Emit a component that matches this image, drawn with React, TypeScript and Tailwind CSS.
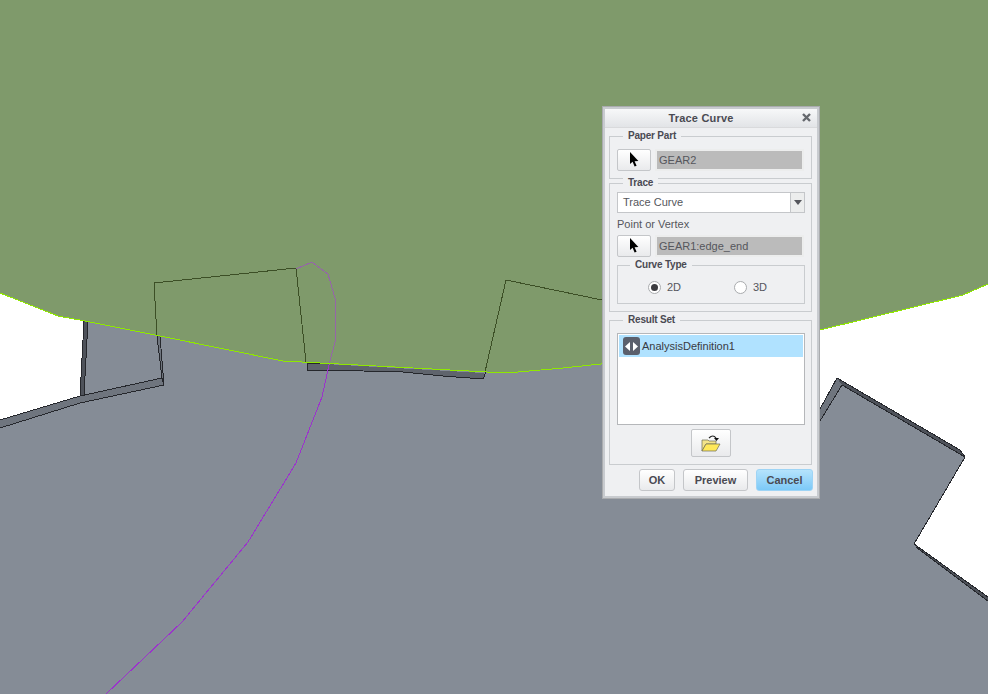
const FONT = { fontFamily: '"Liberation Sans", Arial, sans-serif' };

const Cursor = () => (
  <svg width="11" height="16" viewBox="0 0 11 16">
    <path d="M1 0 L1 12 L3.6 9.8 L5.6 14.6 L7.6 13.8 L5.6 9.2 L9.4 9 Z" fill="#000" />
  </svg>
);

const Fieldset = ({ label, left = "left-3", className, children }: any) => (
  <div className={`relative border border-[#c9cccf] ${className}`}>
    <span className={`absolute -top-[8px] ${left} bg-[#eff0f2] px-[5px] text-[10px] leading-[14px] font-bold tracking-[-0.2px] text-[#4a4a52]`}>
      {label}
    </span>
    {children}
  </div>
);

const PickRow = ({ value }: { value: string }) => (
  <div className="flex items-center gap-[4px]">
    <button className="flex h-[22px] w-[34px] items-center justify-center rounded-[2px] border border-[#c4c6c9] bg-gradient-to-b from-[#ffffff] to-[#e9eaec]">
      <Cursor />
    </button>
    <div className="flex h-[22px] w-[149px] items-center border-2 border-[#eceded] bg-[#bbbbbb] pl-[2px] text-[11px] text-[#55565c]">
      {value}
    </div>
  </div>
);

const Radio = ({ label, on }: { label: string; on?: boolean }) => (
  <div className="flex items-center gap-[6px]">
    <span className="flex h-[13px] w-[13px] items-center justify-center rounded-full border border-[#a9abae] bg-white">
      {on && <span className="h-[7px] w-[7px] rounded-full bg-[#3c3c40]" />}
    </span>
    <span className="text-[11px] text-[#55565c]">{label}</span>
  </div>
);

const ActionButton = ({ label, primary, className }: any) => (
  <button
    className={`h-[22px] rounded-[3px] border text-[11px] font-bold text-[#4a4a52] ${
      primary
        ? "border-[#9ed4f5] bg-gradient-to-b from-[#b5e3fc] to-[#7cc9f7]"
        : "border-[#c4c6c9] bg-gradient-to-b from-[#ffffff] to-[#e9eaec]"
    } ${className}`}
  >
    {label}
  </button>
);

const Scene = () => (
  <svg className="absolute inset-0" width="988" height="694" viewBox="0 0 988 694" shapeRendering="crispEdges">
    <polygon points="0,420 80,396 85,321 283,361 620,362 700,480 820,409 837,378 960,450 965,457 914,544 988,597 988,694 0,694" fill="#858c96" />
    <polygon points="0,0 988,0 988,284 963,295 820,330 620,362 507,373 487,372 395,367 320,363 283,361 160,336 85,321 58,316 0,293" fill="#7f9a6b" />

    {/* left tooth side faces */}
    <polygon points="84,321 88,321 84,395 80,396" fill="#4e525a" />
    <polygon points="0,420 80,396 162,378 164,385 80,403 0,428" fill="#6f757e" />
    <polyline points="0,420 80,396 162,378" fill="none" stroke="#25272c" />
    <polyline points="0,428 80,403 164,385" fill="none" stroke="#25272c" />
    <polyline points="84,321 80,396" fill="none" stroke="#25272c" />
    <polyline points="88,321 84,395" fill="none" stroke="#25272c" />
    <polygon points="157,336 160,336 164,385 162,378" fill="#6f757e" />
    <polyline points="157,336 162,378 164,385" fill="none" stroke="#25272c" />
    <polyline points="160,336 164,385" fill="none" stroke="#25272c" />

    {/* bottom of the notch */}
    <polygon points="307,363 484,373 484,379 403,372 307,370" fill="#5f646c" />
    <polyline points="307,363 307,370 363,371 403,372 443,376 483,379 486,372" fill="none" stroke="#25272c" />
    <polyline points="307,363 320,363" fill="none" stroke="#25272c" />

    {/* right tooth */}
    <polygon points="820,409 837,378 842,385 820,421" fill="#6f757e" />
    <polygon points="837,378 960,450 965,457 842,385" fill="#4e525a" />
    <polyline points="820,409 837,378 960,450 965,457 914,544" fill="none" stroke="#25272c" />
    <polyline points="820,421 842,385 965,457" fill="none" stroke="#25272c" />
    <polygon points="914,544 988,597 988,601 916,547" fill="#4e525a" />
    <polyline points="914,544 988,597" fill="none" stroke="#25272c" />
    <polyline points="916,547 988,601" fill="none" stroke="#25272c" />

    {/* paper part outline */}
    <polyline points="157,336 154,283 296,268 306,362" fill="none" stroke="#3c4f26" />
    <polyline points="485,372 506,280 602,300" fill="none" stroke="#3c4f26" />

    {/* trace curve */}
    <polyline points="296,269 312,262 328,274 335,298 335,342 329,365" fill="none" stroke="#9565a8" />
    <polyline points="329,365 322,397 296,463 248,542 182,622 106,694" fill="none" stroke="#9b33cc" />

    {/* lime edge */}
    <polyline points="0,293 58,316 85,321 160,336 283,361 320,363 395,367 487,372 507,373 563,368 620,362 820,330 963,295 988,284" fill="none" stroke="#8fe800" />
  </svg>
);

export default function App() {
  return (
    <div className="relative h-[694px] w-[988px] overflow-hidden bg-white" style={FONT}>
      <Scene />
      <div className="absolute top-[106px] left-[602px] flex h-[393px] w-[218px] flex-col border-[3px] border-[#c8cbcf] bg-[#eff0f2] outline outline-1 -outline-offset-1 outline-[#a9abae]">
        <div className="relative flex h-[19px] shrink-0 items-center justify-center border-b border-[#d9dadc] bg-gradient-to-b from-[#f7f8f9] to-[#e2e4e7] pr-[20px] text-[11px] font-bold tracking-[0.2px] text-[#4a4a52]">
          Trace Curve
          <svg className="absolute top-[4px] right-[6px]" width="9" height="9" viewBox="0 0 9 9">
            <path d="M1 1 L8 8 M8 1 L1 8" stroke="#66696e" strokeWidth="2.4" />
          </svg>
        </div>
        <div className="flex flex-1 flex-col pt-[8px] pr-[5px] pl-[4px]">
          <Fieldset label="Paper Part" left="left-[13px]" className="h-[43px] shrink-0 pt-[12px] pr-[6px] pl-[7px]">
            <PickRow value="GEAR2" />
          </Fieldset>
          <Fieldset label="Trace" left="left-[13px]" className="mt-[4px] h-[129px] shrink-0 pt-[8px] pr-[6px] pl-[7px]">
            <div className="flex h-[21px] border border-[#c4c6c9] bg-white">
              <span className="flex-1 pl-[5px] text-[11px] leading-[19px] text-[#55565c]">Trace Curve</span>
              <span className="flex w-[14px] items-center justify-center border-l border-[#c4c6c9] bg-[#eceded]">
                <svg width="8" height="5" viewBox="0 0 8 5"><path d="M0 0 H8 L4 5 Z" fill="#55565c" /></svg>
              </span>
            </div>
            <div className="mt-[4px] mb-[3px] text-[11px] leading-[15px] text-[#55565c]">Point or Vertex</div>
            <PickRow value="GEAR1:edge_end" />
            <Fieldset label="Curve Type" left="left-[12px]" className="mt-[8px] h-[39px]">
              <div className="flex pt-[13px] pl-[30px]">
                <div className="w-[86px]"><Radio label="2D" on /></div>
                <Radio label="3D" />
              </div>
            </Fieldset>
          </Fieldset>
          <Fieldset label="Result Set" left="left-[13px]" className="mt-[8px] h-[145px] shrink-0 pt-[12px] pr-[6px] pl-[7px]">
            <div className="h-[92px] border border-[#b5b7ba] bg-white p-[1px]">
              <div className="flex h-[22px] items-center gap-[2px] bg-[#b0e2ff] pl-[4px] text-[11px] text-[#3a3b42]">
                <span className="flex h-[18px] w-[17px] items-center justify-center gap-[1px] rounded-[3px] bg-[#5a5f6c]">
                  <svg width="6" height="9" viewBox="0 0 6 9"><path d="M5 0 V9 L0 4.5 Z" fill="#fff" /></svg>
                  <svg width="6" height="9" viewBox="0 0 6 9"><path d="M1 0 V9 L6 4.5 Z" fill="#fff" /></svg>
                </span>
                AnalysisDefinition1
              </div>
            </div>
            <div className="mt-[4px] flex justify-center">
              <button className="flex h-[28px] w-[40px] items-center justify-center rounded-[2px] border border-[#c4c6c9] bg-gradient-to-b from-[#ffffff] to-[#e9eaec]">
                <svg width="20" height="18" viewBox="0 0 20 18">
                  <path d="M1 6 H7 L8 7 H15 V10 H5 L1 17 Z" fill="#f3e48a" stroke="#6b6b55" strokeWidth="0.7" />
                  <path d="M1 17 L5 10 H19 L15 17 Z" fill="#ffe95a" stroke="#6b6b55" strokeWidth="0.7" />
                  <path d="M8 4 Q12 0 15 4" fill="none" stroke="#222" strokeWidth="1.2" />
                  <path d="M13 4 H18 L15.5 7 Z" fill="#111" />
                </svg>
              </button>
            </div>
          </Fieldset>
          <div className="mt-[4px] -mr-[1px] flex justify-end gap-[8px]">
            <ActionButton label="OK" className="w-[36px]" />
            <ActionButton label="Preview" className="w-[65px]" />
            <ActionButton label="Cancel" primary className="w-[57px]" />
          </div>
        </div>
      </div>
    </div>
  );
}
